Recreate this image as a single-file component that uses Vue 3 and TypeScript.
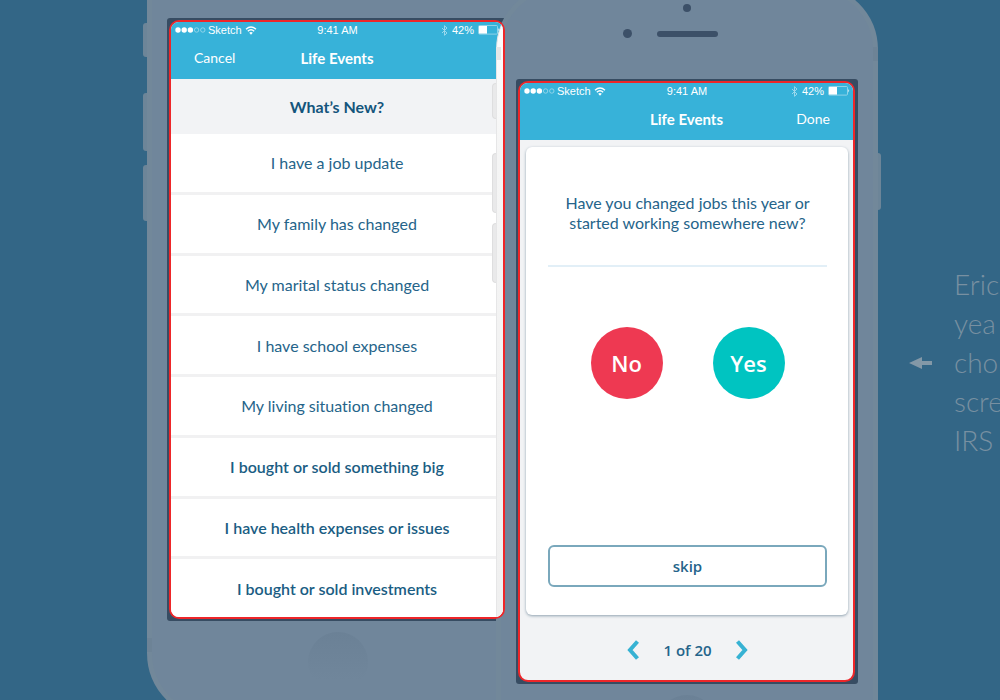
<script setup lang="ts">
import { ref } from 'vue'

const events = ref([
  { label: 'I have a job update', strong: false },
  { label: 'My family has changed', strong: false },
  { label: 'My marital status changed', strong: false },
  { label: 'I have school expenses', strong: false },
  { label: 'My living situation changed', strong: false },
  { label: 'I bought or sold something big', strong: true },
  { label: 'I have health expenses or issues', strong: true },
  { label: 'I bought or sold investments', strong: true },
])

const noteLines = ['Eric', 'yea', 'cho', 'scre', 'IRS']
const devices = ['list', 'question'] as const
const total = 20
const page = ref(1)

function step(by: number) {
  page.value = Math.min(total, Math.max(1, page.value + by))
}
</script>

<template>
  <main class="stage">
    <section v-for="device in devices" :key="device" class="device" :class="device">
      <div class="shell" aria-hidden="true">
        <i class="key key-a"></i>
        <i class="key key-b"></i>
        <i class="key key-c"></i>
        <i class="key power"></i>
        <i class="antenna"></i>
        <i class="camera"></i>
        <i class="sensor"></i>
        <i class="speaker"></i>
        <i class="bezel"></i>
        <i class="home"></i>
      </div>

      <div class="screen">
        <header class="top">
          <div class="status">
            <div class="carrier">
              <svg class="signal" viewBox="0 0 31 6" aria-hidden="true">
                <circle cx="3" cy="3" r="2.7" fill="#fff" />
                <circle cx="9.2" cy="3" r="2.7" fill="#fff" />
                <circle cx="15.4" cy="3" r="2.7" fill="#fff" />
                <circle cx="21.6" cy="3" r="2.2" fill="none" stroke="#a5dcee" stroke-width=".8" />
                <circle cx="27.8" cy="3" r="2.2" fill="none" stroke="#a5dcee" stroke-width=".8" />
              </svg>
              <span>Sketch</span>
              <svg class="wifi" viewBox="0 0 12 9" aria-hidden="true">
                <path d="M1 3.2Q6-1.2 11 3.2M2.8 5.2Q6 2.4 9.2 5.2" fill="none" stroke="#fff" stroke-width="1.4" />
                <path d="M4.2 6.7Q6 5.2 7.8 6.7L6 8.8Z" fill="#fff" />
              </svg>
            </div>
            <span>9:41 AM</span>
            <div class="power-info">
              <svg class="bluetooth" viewBox="0 0 7 11" aria-hidden="true">
                <path d="M1 3l5 5-2.5 2.3V.7L6 3 1 8" fill="none" stroke="#a5dcee" stroke-width=".9" />
              </svg>
              <span>42%</span>
              <svg class="battery" viewBox="0 0 22 10" aria-hidden="true">
                <rect x=".5" y=".5" width="19" height="8.6" rx="1" fill="none" stroke="#a5dcee" stroke-width=".8" />
                <rect x="1" y="1" width="8" height="7.6" fill="#fff" />
                <path d="M20.4 3q1.6 1.8 0 3.6z" fill="#fff" />
              </svg>
            </div>
          </div>
          <nav class="bar">
            <button v-if="device === 'list'" type="button" class="cancel">Cancel</button>
            <h1>Life Events</h1>
            <button v-if="device === 'question'" type="button" class="done">Done</button>
          </nav>
        </header>

        <template v-if="device === 'list'">
          <h2>What’s New?</h2>
          <ul class="events">
            <li v-for="event in events" :key="event.label">
              <button type="button" :class="{ strong: event.strong }">{{ event.label }}</button>
            </li>
          </ul>
          <div class="overlap" aria-hidden="true">
            <i class="tab tab-a"></i>
            <i class="tab tab-b"></i>
            <i class="tab tab-c"></i>
            <i class="side"></i>
            <i class="band"></i>
          </div>
        </template>

        <template v-else>
          <article class="card">
            <p class="ask">Have you changed jobs this year or<br />started working somewhere new?</p>
            <div class="answers">
              <button type="button" class="no">No</button>
              <button type="button" class="yes">Yes</button>
            </div>
            <button type="button" class="skip">skip</button>
          </article>
          <footer class="pager">
            <button type="button" aria-label="Previous" @click="step(-1)">
              <svg viewBox="0 0 12 20"><path d="M10.5 1.5L3 10l7.5 8.5" /></svg>
            </button>
            <span>{{ page }} of {{ total }}</span>
            <button type="button" aria-label="Next" @click="step(1)">
              <svg viewBox="0 0 12 20"><path d="M1.5 1.5L9 10l-7.5 8.5" /></svg>
            </button>
          </footer>
        </template>
      </div>
    </section>

    <aside class="note">
      <svg class="arrow" viewBox="0 0 23 12" aria-hidden="true">
        <path d="M0 6L13 0v4h10v4H13v4z" fill="#8398a7" />
      </svg>
      <p><span v-for="line in noteLines" :key="line">{{ line }}</span></p>
    </aside>
  </main>
</template>

<style>
body {
  margin: 0;
  background: #336686;
}
</style>

<style scoped>
.stage {
  box-sizing: border-box;
  display: grid;
  grid-template-columns: 336fr 337fr 132fr;
  column-gap: 13px;
  align-items: start;
  height: 100vh;
  padding-top: 20px;
  padding-left: 169px;
  overflow: hidden;
  background: #336686;
  font-family: Lato, "Open Sans", sans-serif;
  font-variant-ligatures: none;
  color: #25648a;
}

button {
  padding: 0;
  border: 0;
  background: none;
  color: inherit;
  font: inherit;
  font-variant-ligatures: none;
  cursor: pointer;
}

.device {
  position: relative;
}

.question {
  margin-top: 61px;
}

/* phone body */
.shell {
  position: absolute;
  top: -97px;
  right: -23px;
  bottom: -100px;
  left: -22px;
  box-sizing: border-box;
  border: 5px solid #72889a;
  border-radius: 66px;
  background: #70869b;
}

.shell i {
  position: absolute;
}

.key {
  left: -9px;
  width: 4px;
  border-radius: 3px 0 0 3px;
  background: #6d8598;
}

.key-a { top: 95px; height: 34px; }
.key-b { top: 165px; height: 58px; }
.key-c { top: 237px; height: 56px; }

.question .key {
  display: none;
}

.question .power {
  display: block;
  top: 164px;
  right: -8px;
  left: auto;
  width: 3px;
  height: 57px;
  border-radius: 0 3px 3px 0;
}

.list .power {
  display: none;
}

.antenna {
  bottom: 62px;
  left: -5px;
  width: 5px;
  height: 14px;
  background: #6d8396;
}

.question .antenna {
  top: 58px;
  right: -5px;
  bottom: auto;
  left: auto;
}

.camera {
  top: 15px;
  left: 50%;
  width: 8px;
  height: 8px;
  margin-left: -4px;
  border-radius: 50%;
  background: #3c5068;
}

.sensor {
  top: 40px;
  left: 50%;
  width: 9px;
  height: 9px;
  margin-left: -64px;
  border-radius: 50%;
  background: #3c5068;
}

.speaker {
  top: 42px;
  left: 50%;
  width: 61px;
  height: 6px;
  margin-left: -30px;
  border-radius: 3px;
  background: #3c5068;
}

.bezel {
  top: 90px;
  right: 15px;
  bottom: 93px;
  left: 15px;
  border-radius: 3px;
  background: #374c62;
}

.home {
  bottom: 22px;
  left: 50%;
  width: 60px;
  height: 60px;
  margin-left: -30px;
  border-radius: 50%;
  background: linear-gradient(#6b8196, #70869b 80%);
}

/* highlighted screen */
.screen {
  position: relative;
  z-index: 1;
  box-sizing: border-box;
  display: flex;
  flex-direction: column;
  aspect-ratio: 336 / 599;
  overflow: hidden;
  border: 2px solid #ee2629;
  border-radius: 10px;
  background: #f2f3f5;
}

.top {
  background: #37b2d9;
  color: #fff;
}

.status {
  display: grid;
  grid-template-columns: 1fr auto 1fr;
  align-items: center;
  height: 16px;
  padding: 0 3px 0 4px;
  font: 11px/16px "Liberation Sans", Arial, sans-serif;
}

.carrier,
.power-info {
  display: flex;
  align-items: center;
}

.power-info {
  justify-content: flex-end;
}

.signal { width: 31px; height: 6px; margin-right: 2px; }
.wifi { width: 12px; height: 9px; margin-left: 3px; }
.bluetooth { width: 7px; height: 11px; margin-right: 4px; }
.battery { width: 22px; height: 10px; margin-left: 4px; }

.bar {
  display: grid;
  grid-template-columns: 1fr auto 1fr;
  align-items: center;
  height: 39px;
  padding: 0 23px 2px;
  font-size: 14px;
}

.bar h1 {
  grid-column: 2;
  margin: 0;
  font-size: 15px;
  font-weight: 700;
}

.cancel { justify-self: start; }
.done { justify-self: end; }

h2 {
  margin: 0;
  color: #14557c;
  font-size: 16px;
  font-weight: 700;
  line-height: 55px;
  text-align: center;
}

.events {
  display: flex;
  flex: 1;
  flex-direction: column;
  margin: 0;
  padding: 0;
  background: #fff;
  list-style: none;
}

.events li {
  display: flex;
  flex: auto;
  border-bottom: 3px solid #f1f1f2;
}

.events li:last-child {
  border-bottom: 0;
}

.events button {
  flex: 1;
  padding-top: 1px;
  font-size: 16px;
  line-height: 20px;
}

.events .strong {
  color: #1a5d83;
  font-weight: 600;
}

/* edge of the phone lying over the list */
.overlap {
  position: absolute;
  inset: 0;
  overflow: hidden;
  pointer-events: none;
}

.overlap i {
  position: absolute;
}

.side {
  top: -38px;
  bottom: -60px;
  left: calc(100% - 7px);
  width: 300px;
  border-left: 1px solid #e6e6e7;
  border-radius: 66px 0 0;
  background: linear-gradient(#fff, #f5f5f5 25%, #efefef);
}

.tab {
  right: 6px;
  box-sizing: border-box;
  width: 5px;
  border: 1px solid #dededf;
  border-right: 0;
  border-radius: 4px 0 0 4px;
  background: #e9e9ea;
}

.tab-a { top: 61px; height: 36px; }
.tab-b { top: 131px; height: 60px; }
.tab-c { top: 201px; height: 60px; }

.band {
  top: 25px;
  right: 2px;
  width: 5px;
  height: 13px;
  background: #e6e6e6;
}

/* question card */
.card {
  display: flex;
  flex: 1;
  flex-direction: column;
  margin: 7px 5px 0 6px;
  padding: 46px 21px 28px 22px;
  border-radius: 6px;
  background: #fff;
  box-shadow: 0 1px 3px #8fa1af;
}

.ask {
  margin: 0;
  padding-bottom: 32px;
  border-bottom: 2px solid #e2eff7;
  font-size: 16px;
  line-height: 20px;
  text-align: center;
  white-space: nowrap;
}

.answers {
  display: flex;
  justify-content: center;
  gap: 50px;
  padding-top: 60px;
  padding-bottom: 40px;
}

.answers button {
  width: 72px;
  height: 72px;
  border-radius: 50%;
  color: #fff;
  font-family: "Open Sans", sans-serif;
  font-size: 22px;
  font-weight: 600;
}

.answers .no { background: #ee3952; }
.answers .yes { background: #00c4c1; }

.skip {
  height: 42px;
  margin-top: auto;
  border: 2px solid #7aa8bc;
  border-radius: 6px;
  font-family: "Open Sans", sans-serif;
  font-size: 15px;
  font-weight: 600;
}

.pager {
  display: flex;
  align-items: center;
  justify-content: center;
  gap: 24px;
  height: 60px;
  padding: 5px 0 0 2px;
  font-family: "Open Sans", sans-serif;
  font-size: 15px;
  font-weight: 600;
}

.pager button {
  height: 20px;
}

.pager svg {
  display: block;
  width: 12px;
  height: 20px;
  fill: none;
  stroke: #37b2d3;
  stroke-width: 4;
}

/* caption running off the page */
.note {
  display: flex;
  align-items: center;
  gap: 22px;
  min-width: 0;
  margin-top: 245px;
  padding-left: 41px;
  color: #7890a1;
}

.arrow {
  flex: none;
  width: 23px;
  height: 12px;
}

.note p {
  margin: 0;
  font-size: 28px;
  font-weight: 300;
  line-height: 39px;
}

.note span {
  display: block;
}
</style>
